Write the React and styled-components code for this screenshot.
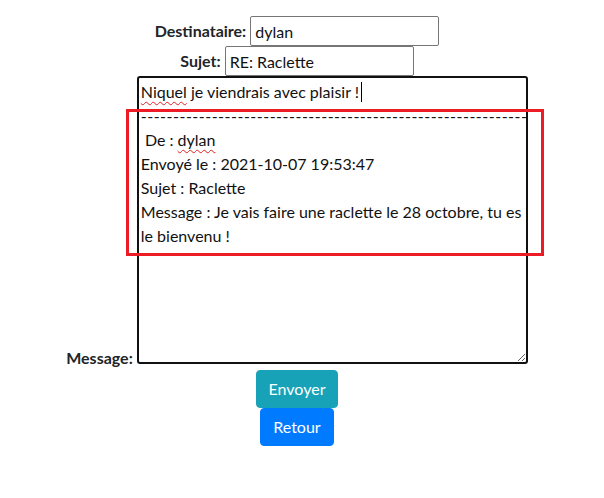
import React from "react";
import styled, { createGlobalStyle } from "styled-components";

const GlobalStyle = createGlobalStyle`
  body {
    margin: 8px;
    background: #ffffff;
    color: #212529;
    font-family: Lato, "Noto Sans", sans-serif;
    font-size: 16px;
    line-height: 1.5;
  }
`;

const Page = styled.div`
  position: relative;
  width: 578px;
  padding-top: 8px;
`;

const Row = styled.div`
  display: flex;
  justify-content: center;
  align-items: ${(p) => (p.$bottom ? "flex-end" : "center")};
  gap: 4px;
  height: ${(p) => (p.$bottom ? "auto" : "30px")};
`;

const Label = styled.label`
  font-weight: 700;
  color: #212529;
  line-height: 24px;
  margin-bottom: ${(p) => (p.$bottom ? "-6px" : "0")};
`;

const Input = styled.input`
  box-sizing: border-box;
  width: 189px;
  height: 30px;
  padding: 1px 4px;
  border: 1px solid #767676;
  border-radius: 2px;
  font-family: inherit;
  font-size: 16px;
  color: #111;
  background: #fff;
`;

const Editor = styled.div`
  box-sizing: border-box;
  width: 391px;
  height: 288px;
  padding: 2px;
  border: 2px solid #111;
  border-radius: 3px;
  font-size: 16px;
  line-height: 24px;
  color: #111;
  text-align: left;
  overflow: auto;
  resize: both;
  outline: none;
`;

const Line = styled.div`
  white-space: nowrap;
`;

const Rule = styled.div`
  white-space: nowrap;
  letter-spacing: ${(p) => p.$spacing}px;
`;

const Misspelled = styled.span`
  text-decoration: underline wavy #e02020;
  text-decoration-thickness: 1px;
  text-underline-offset: 3px;
`;

const Caret = styled.span`
  display: inline-block;
  width: 1px;
  height: 20px;
  margin-left: 2px;
  background: #000;
  vertical-align: -4px;
`;

const Buttons = styled.div`
  display: flex;
  flex-direction: column;
  align-items: center;
  padding-top: 6px;
`;

const Button = styled.button`
  padding: 6px 12px;
  border: 1px solid ${(p) => p.$color};
  border-radius: 4px;
  background: ${(p) => p.$color};
  color: #fff;
  font-family: inherit;
  font-size: 16px;
  line-height: 24px;
  cursor: pointer;
`;

const Annotation = styled.div`
  position: absolute;
  left: 118px;
  top: 101px;
  width: 418px;
  height: 147px;
  box-sizing: border-box;
  border: 3px solid #ed1c24;
  pointer-events: none;
`;

export default function App() {
  const dashes = "-".repeat(62);
  return (
    <>
      <GlobalStyle />
      <Page>
        <Row>
          <Label htmlFor="dest">Destinataire:</Label>
          <Input id="dest" defaultValue="dylan" />
        </Row>
        <Row>
          <Label htmlFor="sujet">Sujet:</Label>
          <Input id="sujet" defaultValue="RE: Raclette" />
        </Row>
        <Row $bottom>
          <Label $bottom>Message:</Label>
          <Editor contentEditable suppressContentEditableWarning>
            <Line>
              <Misspelled>Niquel</Misspelled> je viendrais avec plaisir !<Caret />
            </Line>
            <Rule $spacing={0.5}>{dashes}</Rule>
            <Line>
              {"\u00a0"}De : <Misspelled>dylan</Misspelled>
            </Line>
            <Line>Envoyé le : 2021-10-07 19:53:47</Line>
            <Line>Sujet : Raclette</Line>
            <Line>Message : Je vais faire une raclette le 28 octobre, tu es</Line>
            <Line>le bienvenu !</Line>
          </Editor>
        </Row>
        <Buttons>
          <Button $color="#17a2b8">Envoyer</Button>
          <Button $color="#007bff">Retour</Button>
        </Buttons>
        <Annotation />
      </Page>
    </>
  );
}
